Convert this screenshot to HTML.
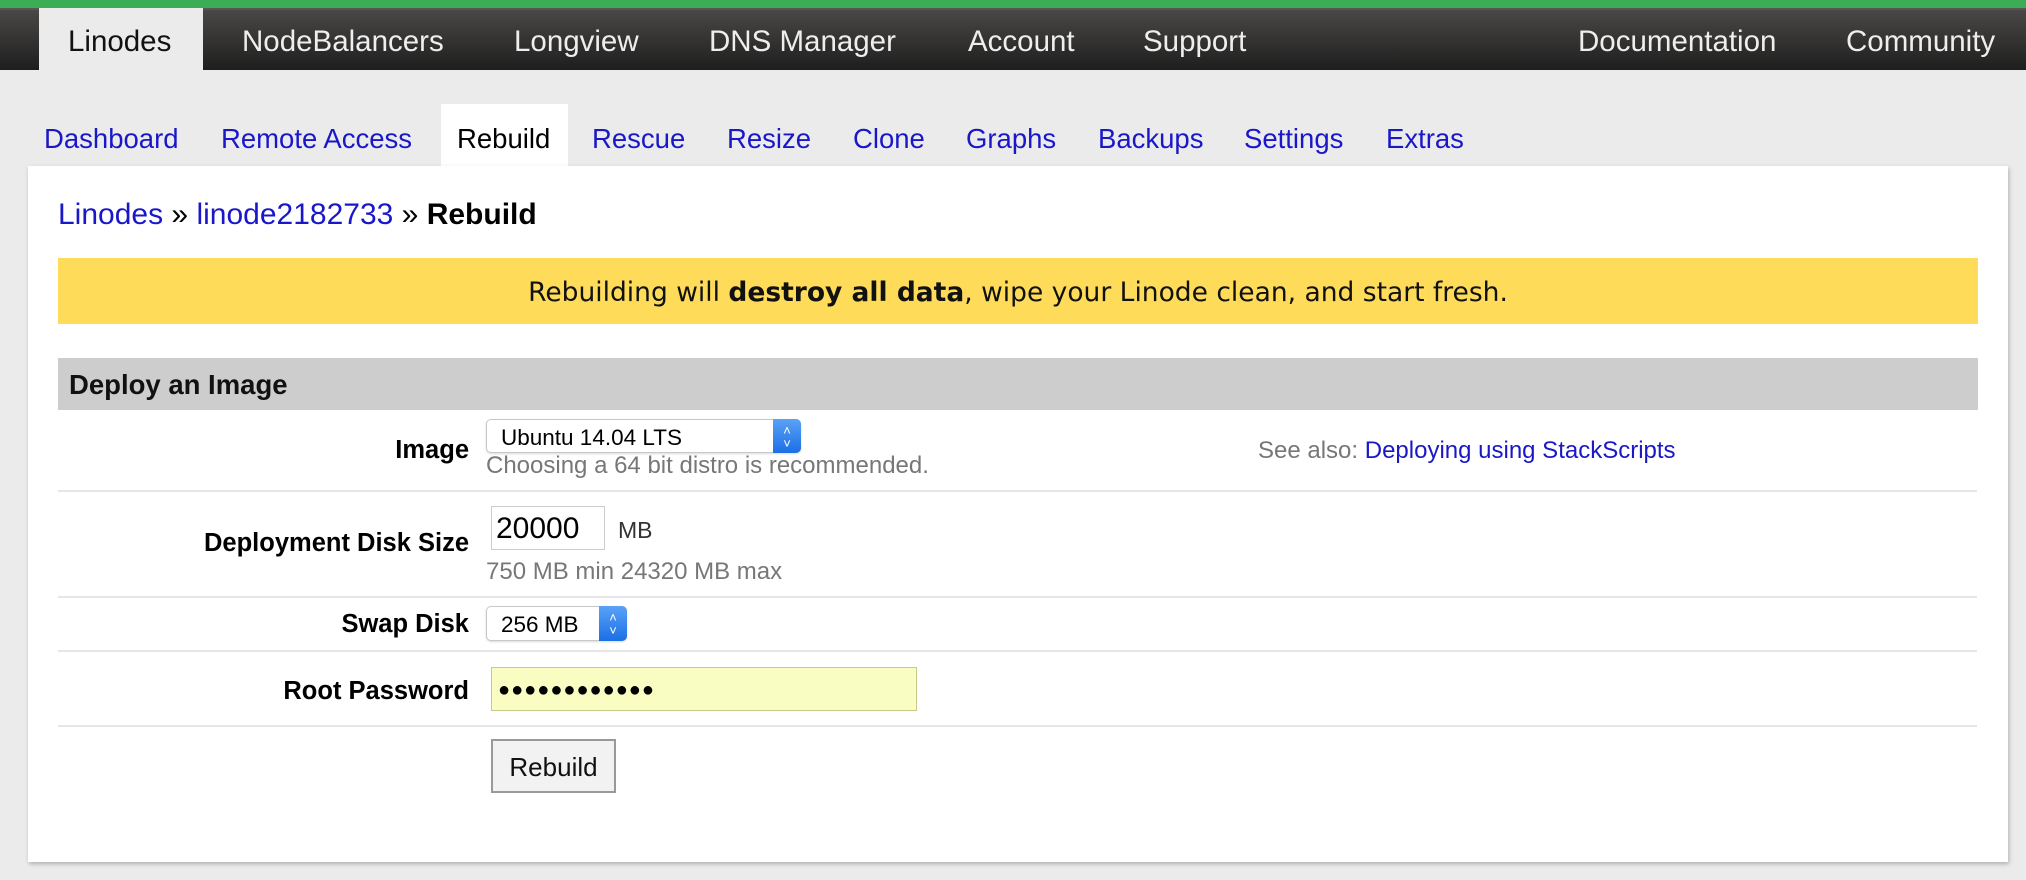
<!DOCTYPE html>
<html><head><style>
*{margin:0;padding:0;box-sizing:border-box}
body{width:2026px;height:880px;background:#ebebeb;font-family:"Liberation Sans",Arial,sans-serif;position:relative;overflow:hidden}
.a{position:absolute;white-space:nowrap}
#green{left:0;top:0;width:2026px;height:8px;background:#3aad55}
#nav{left:0;top:8px;width:2026px;height:62px;background:linear-gradient(#4a4846,#1e1e1e);border-top:2px solid #555}
.n{color:#eee;font-size:29.5px;top:25px}
#lt{left:39px;top:8px;width:164px;height:62px;background:#ebebeb}
.s{color:#1a17c8;font-size:27.5px;top:123px}
#rt{left:441px;top:104px;width:127px;height:66px;background:#fff}
#panel{left:28px;top:166px;width:1980px;height:696px;background:#fff;box-shadow:1px 2px 4px rgba(0,0,0,.25)}
.lbl{font-weight:bold;font-size:25.5px;color:#000;text-align:right;right:1557px}
.hr{left:58px;width:1919px;height:2px;background:#e6e6e6}
.hint{color:#777;font-size:24px}
.sel{background:#fff;border:1px solid #c8c8c8;border-radius:5px;font-size:22.5px;padding:5px 14px;box-shadow:0 1px 2px rgba(0,0,0,.15)}
.arr{position:absolute;right:-1px;top:-1px;bottom:-1px;width:28px;background:linear-gradient(#5aa2f7,#1b6fe6);border-radius:0 5px 5px 0;color:#fff;font-size:13px;text-align:center;line-height:13px;padding-top:5px}
</style></head><body>
<div class="a" id="green"></div>
<div class="a" id="nav"></div>
<div class="a" id="lt"></div>
<div class="a n" style="left:68px;color:#111">Linodes</div>
<div class="a n" style="left:242px">NodeBalancers</div>
<div class="a n" style="left:514px">Longview</div>
<div class="a n" style="left:709px">DNS Manager</div>
<div class="a n" style="left:968px">Account</div>
<div class="a n" style="left:1143px">Support</div>
<div class="a n" style="left:1578px">Documentation</div>
<div class="a n" style="left:1846px">Community</div>

<div class="a" id="rt"></div>
<div class="a s" style="left:44px">Dashboard</div>
<div class="a s" style="left:221px">Remote Access</div>
<div class="a s" style="left:457px;color:#000">Rebuild</div>
<div class="a s" style="left:592px">Rescue</div>
<div class="a s" style="left:727px">Resize</div>
<div class="a s" style="left:853px">Clone</div>
<div class="a s" style="left:966px">Graphs</div>
<div class="a s" style="left:1098px">Backups</div>
<div class="a s" style="left:1244px">Settings</div>
<div class="a s" style="left:1386px">Extras</div>

<div class="a" id="panel"></div>
<div class="a" style="left:58px;top:198px;font-size:30px;color:#000"><span style="color:#1a17c8">Linodes</span> » <span style="color:#1a17c8">linode2182733</span> » <b>Rebuild</b></div>

<div class="a" style="left:58px;top:258px;width:1920px;height:66px;background:#fedb58;font-family:'DejaVu Sans',sans-serif;font-size:26.5px;text-align:center;line-height:70px;color:#111">Rebuilding will <b>destroy all data</b>, wipe your Linode clean, and start fresh.</div>

<div class="a" style="left:58px;top:358px;width:1920px;height:52px;background:#cdcdcd;font-size:27.5px;font-weight:bold;padding-left:11px;line-height:54px;color:#111">Deploy an Image</div>

<div class="a lbl" style="top:436px">Image</div>
<div class="a sel" style="left:486px;top:419px;width:315px;height:34px">Ubuntu 14.04 LTS<div class="arr">˄<br>˅</div></div>
<div class="a hint" style="left:486px;top:452px">Choosing a 64 bit distro is recommended.</div>
<div class="a hint" style="left:1258px;top:437px">See also: <span style="color:#1a17c8">Deploying using StackScripts</span></div>
<div class="a hr" style="top:490px"></div>

<div class="a lbl" style="top:529px">Deployment Disk Size</div>
<div class="a" style="left:491px;top:506px;width:114px;height:44px;border:1px solid #ccc;font-size:30px;padding:5px 4px">20000</div>
<div class="a" style="left:618px;top:517px;font-size:23px;color:#333">MB</div>
<div class="a hint" style="left:486px;top:558px">750 MB min 24320 MB max</div>
<div class="a hr" style="top:596px"></div>

<div class="a lbl" style="top:610px">Swap Disk</div>
<div class="a sel" style="left:486px;top:606px;width:141px;height:35px">256 MB<div class="arr">˄<br>˅</div></div>
<div class="a hr" style="top:650px"></div>

<div class="a lbl" style="top:677px">Root Password</div>
<div class="a" style="left:491px;top:667px;width:426px;height:44px;background:#fafdc2;border:1px solid #c9c98a;font-size:20px;padding:11px 6px;letter-spacing:1px">●●●●●●●●●●●●</div>
<div class="a hr" style="top:725px"></div>

<div class="a" style="left:491px;top:739px;width:125px;height:54px;background:#f2f2f2;border:2px solid #999;font-size:26px;text-align:center;line-height:52px;color:#111">Rebuild</div>
</body></html>
